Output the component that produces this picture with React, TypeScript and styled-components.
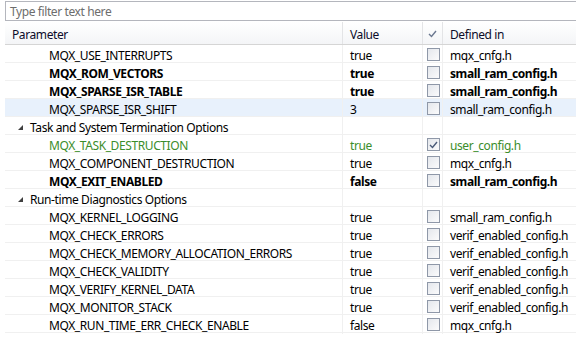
import React from "react";
import styled, { createGlobalStyle, css } from "styled-components";

const Global = createGlobalStyle`
  html, body { margin: 0; padding: 0; background: #fff; }
  body { font-family: "Noto Sans", "Open Sans", sans-serif; font-size: 12px; letter-spacing: -0.4px; color: #000; }
`;

const Page = styled.div`
  width: 576px;
  height: 337px;
  overflow: hidden;
  padding-left: 5px;
  padding-top: 1px;
  box-sizing: border-box;
`;

const Filter = styled.div`
  height: 20px;
  box-sizing: border-box;
  border: 1px solid #b4b6bd;
  border-right: none;
  margin-right: -2px;
  display: flex;
  align-items: center;
  padding-left: 4px;
  padding-top: 1px;
  color: #6d6d6d;
`;

const cols = css`
  display: grid;
  grid-template-columns: 338px 80px 20px 1fr;
`;

const Header = styled.div`
  ${cols};
  margin-top: 1px;
  height: 22px;
  background: linear-gradient(#ffffff, #f4f5f7);
  border-bottom: 1px solid #d5d5d5;
`;

const HeadCell = styled.div<{ $last?: boolean; $center?: boolean }>`
  display: flex;
  align-items: center;
  justify-content: ${(p) => (p.$center ? "center" : "flex-start")};
  padding-left: ${(p) => (p.$center ? "0" : "7px")};
  padding-top: 2px;
  border-right: ${(p) => (p.$last ? "none" : "1px solid #e3e4e6")};
  color: #0c0c2a;
`;

const Row = styled.div<{ $selected?: boolean }>`
  ${cols};
  height: 18px;
  box-sizing: border-box;
  border-bottom: 1px solid #f0f0f0;
  background: ${(p) => (p.$selected ? "#e8f1fc" : "transparent")};
`;

const Cell = styled.div<{ $indent?: number; $last?: boolean; $bold?: boolean; $green?: boolean }>`
  display: flex;
  align-items: center;
  white-space: nowrap;
  overflow: visible;
  padding-left: ${(p) => p.$indent ?? 7}px;
  padding-top: 2px;
  border-right: ${(p) => (p.$last ? "none" : "1px solid #f0f0f0")};
  font-weight: ${(p) => (p.$bold ? 700 : 400)};
  color: ${(p) => (p.$green ? "#3b8d2b" : "#000")};
`;

const GroupCell = styled(Cell)`
  gap: 6px;
  padding-left: 12px;
`;

const BoxCell = styled.div`
  display: flex;
  align-items: center;
  padding-left: 4px;
  border-right: 1px solid #f0f0f0;
`;

const Box = styled.div`
  width: 11px;
  height: 11px;
  border: 1px solid #8f98a8;
  background: linear-gradient(135deg, #e4e7ec, #fbfbfc);
  display: flex;
  align-items: center;
  justify-content: center;
`;

const Check = ({ color = "#4a5a78" }: { color?: string }) => (
  <svg width="9" height="8" viewBox="0 0 9 8">
    <path d="M1 4 L3.5 6.5 L8 1" fill="none" stroke={color} strokeWidth="1.4" />
  </svg>
);

const Tri = () => (
  <svg width="7" height="7" viewBox="0 0 7 7">
    <path d="M6 1 L6 6 L1 6 Z" fill="#404040" />
  </svg>
);

type P = {
  name: string;
  value: string;
  file: string;
  bold?: boolean;
  green?: boolean;
  checked?: boolean;
  selected?: boolean;
};

type Item = P | { group: string };

const items: Item[] = [
  { name: "MQX_USE_INTERRUPTS", value: "true", file: "mqx_cnfg.h" },
  { name: "MQX_ROM_VECTORS", value: "true", file: "small_ram_config.h", bold: true },
  { name: "MQX_SPARSE_ISR_TABLE", value: "true", file: "small_ram_config.h", bold: true },
  { name: "MQX_SPARSE_ISR_SHIFT", value: "3", file: "small_ram_config.h", selected: true },
  { group: "Task and System Termination Options" },
  { name: "MQX_TASK_DESTRUCTION", value: "true", file: "user_config.h", green: true, checked: true },
  { name: "MQX_COMPONENT_DESTRUCTION", value: "true", file: "mqx_cnfg.h" },
  { name: "MQX_EXIT_ENABLED", value: "false", file: "small_ram_config.h", bold: true },
  { group: "Run-time Diagnostics Options" },
  { name: "MQX_KERNEL_LOGGING", value: "true", file: "small_ram_config.h" },
  { name: "MQX_CHECK_ERRORS", value: "true", file: "verif_enabled_config.h" },
  { name: "MQX_CHECK_MEMORY_ALLOCATION_ERRORS", value: "true", file: "verif_enabled_config.h" },
  { name: "MQX_CHECK_VALIDITY", value: "true", file: "verif_enabled_config.h" },
  { name: "MQX_VERIFY_KERNEL_DATA", value: "true", file: "verif_enabled_config.h" },
  { name: "MQX_MONITOR_STACK", value: "true", file: "verif_enabled_config.h" },
  { name: "MQX_RUN_TIME_ERR_CHECK_ENABLE", value: "false", file: "mqx_cnfg.h" },
];

export default function App() {
  return (
    <>
      <Global />
      <Page>
        <Filter>Type filter text here</Filter>
        <Header>
          <HeadCell>Parameter</HeadCell>
          <HeadCell>Value</HeadCell>
          <HeadCell $center>
            <Check color="#6b7890" />
          </HeadCell>
          <HeadCell $last>Defined in</HeadCell>
        </Header>
        {items.map((it, i) =>
          "group" in it ? (
            <Row key={i}>
              <GroupCell>
                <Tri />
                {it.group}
              </GroupCell>
              <Cell />
              <Cell />
              <Cell $last />
            </Row>
          ) : (
            <Row key={i} $selected={it.selected}>
              <Cell $indent={44} $bold={it.bold} $green={it.green}>
                {it.name}
              </Cell>
              <Cell $bold={it.bold} $green={it.green}>
                {it.value}
              </Cell>
              <BoxCell>
                <Box>{it.checked && <Check />}</Box>
              </BoxCell>
              <Cell $last $bold={it.bold} $green={it.green}>
                {it.file}
              </Cell>
            </Row>
          )
        )}
      </Page>
    </>
  );
}
